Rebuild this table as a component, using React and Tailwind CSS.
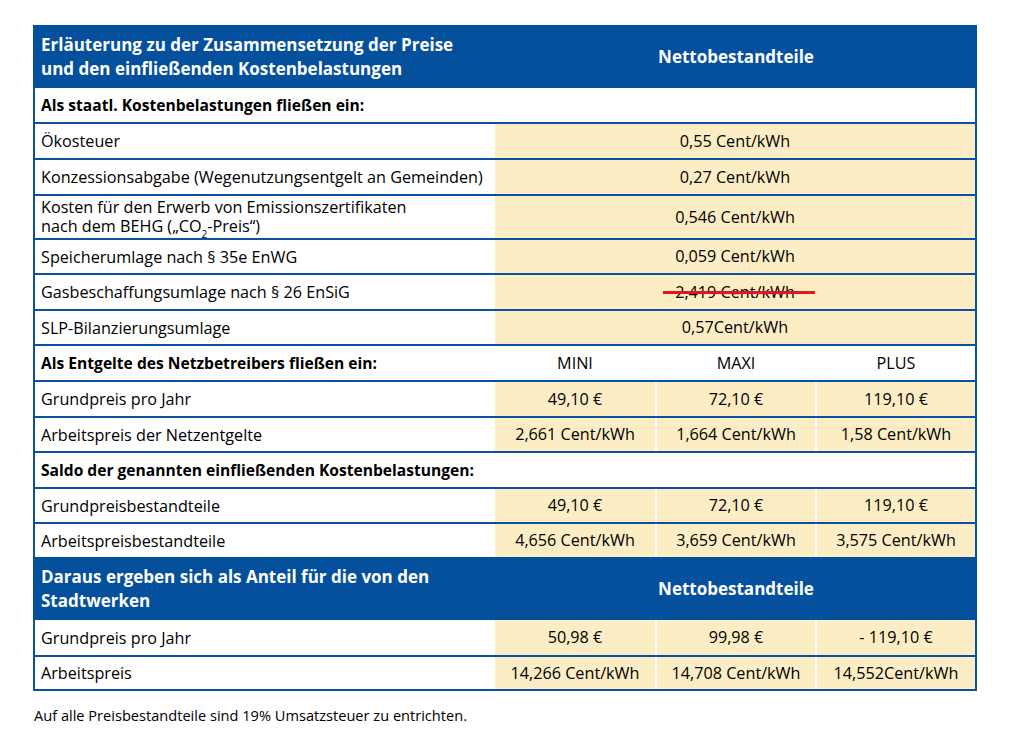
import React from "react";

const BLUE = "bg-[#04509c]";

function Row({ label, bold, h = "h-[36px]", children, first }) {
  return (
    <div className={`flex ${h} ${first ? "" : "border-t-2 border-[#0a52a0]"}`}>
      <div className={`w-[460px] flex items-center pl-[6px] leading-[18px] ${bold ? "font-bold text-[15.6px]" : ""}`}>{label}</div>
      {children}
    </div>
  );
}

function Span({ children }) {
  return <div className="flex-1 bg-[#fdedc5] flex items-center justify-center">{children}</div>;
}

function Three({ values, plain }) {
  return (
    <div className="flex-1 flex gap-[2px]">
      {values.map((v, i) => (
        <div
          key={i}
          className={`${i === 0 ? "w-[160px]" : "flex-1"} ${plain ? "" : "bg-[#fdedc5]"} flex items-center justify-center`}
        >
          {v}
        </div>
      ))}
    </div>
  );
}

function Header({ children }) {
  return (
    <div className={`flex h-[63px] ${BLUE} text-white font-bold text-[17px] leading-[24px] -mx-[2px]`}>
      <div className="w-[462px] flex items-center pl-[8px]">{children}</div>
      <div className="flex-1 flex items-center justify-center">Nettobestandteile</div>
    </div>
  );
}

export default function App() {
  return (
    <div className="w-[1023px] h-[742px] bg-white text-black text-[16.2px]" style={{ fontFamily: "'Open Sans', sans-serif" }}>
      <div className="pt-[25px] pl-[33px] w-[977px]">
        <div className="border-x-2 border-b-2 border-[#0a52a0]">
          <Header>
            <div>
              Erläuterung zu der Zusammensetzung der Preise
              <br />
              und den einfließenden Kostenbelastungen
            </div>
          </Header>
          <Row first bold label="Als staatl. Kostenbelastungen fließen ein:" h="h-[34px]" />
          <Row label="Ökosteuer">
            <Span>0,55 Cent/kWh</Span>
          </Row>
          <Row label="Konzessionsabgabe (Wegenutzungsentgelt an Gemeinden)">
            <Span>0,27 Cent/kWh</Span>
          </Row>
          <Row
            h="h-[44px]"
            label={
              <div className="leading-[19px]">
                Kosten für den Erwerb von Emissionszertifikaten
                <br />
                nach dem BEHG („CO<sub className="text-[10px] leading-none align-[-3px]">2</sub>-Preis“)
              </div>
            }
          >
            <Span>0,546 Cent/kWh</Span>
          </Row>
          <Row label="Speicherumlage nach § 35e EnWG" h="h-[35px]">
            <Span>0,059 Cent/kWh</Span>
          </Row>
          <Row label="Gasbeschaffungsumlage nach § 26 EnSiG">
            <Span>
              <span className="relative">
                2,419 Cent/kWh
                <span className="absolute left-[-12px] right-[-20px] top-[11px] h-[3px] bg-[#e3161e]" />
              </span>
            </Span>
          </Row>
          <Row label="SLP-Bilanzierungsumlage" h="h-[35px]">
            <Span>0,57Cent/kWh</Span>
          </Row>
          <Row bold label="Als Entgelte des Netzbetreibers fließen ein:">
            <Three plain values={["MINI", "MAXI", "PLUS"]} />
          </Row>
          <Row label="Grundpreis pro Jahr">
            <Three values={["49,10 €", "72,10 €", "119,10 €"]} />
          </Row>
          <Row label="Arbeitspreis der Netzentgelte" h="h-[35px]">
            <Three values={["2,661 Cent/kWh", "1,664 Cent/kWh", "1,58 Cent/kWh"]} />
          </Row>
          <Row bold label="Saldo der genannten einfließenden Kostenbelastungen:" />
          <Row label="Grundpreisbestandteile" h="h-[35px]">
            <Three values={["49,10 €", "72,10 €", "119,10 €"]} />
          </Row>
          <Row label="Arbeitspreisbestandteile" h="h-[35px]">
            <Three values={["4,656 Cent/kWh", "3,659 Cent/kWh", "3,575 Cent/kWh"]} />
          </Row>
          <Header>
            <div>
              Daraus ergeben sich als Anteil für die von den
              <br />
              Stadtwerken
            </div>
          </Header>
          <Row first label="Grundpreis pro Jahr" h="h-[35px]">
            <Three values={["50,98 €", "99,98 €", "- 119,10 €"]} />
          </Row>
          <Row label="Arbeitspreis" h="h-[34px]">
            <Three values={["14,266 Cent/kWh", "14,708 Cent/kWh", "14,552Cent/kWh"]} />
          </Row>
        </div>
        <p className="mt-[14px] pl-[1px] text-[14.6px]">Auf alle Preisbestandteile sind 19% Umsatzsteuer zu entrichten.</p>
      </div>
    </div>
  );
}
